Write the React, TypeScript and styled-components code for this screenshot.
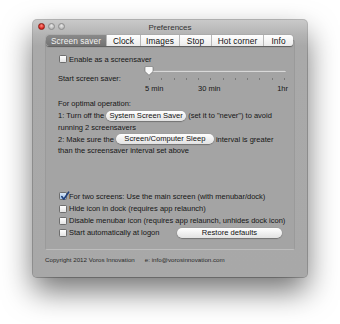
import React from "react";
import styled, { createGlobalStyle } from "styled-components";

const Global = createGlobalStyle`
  html, body { margin: 0; padding: 0; background: #ffffff; }
  body { font-family: "Liberation Sans", Arial, sans-serif; -webkit-font-smoothing: antialiased; }
`;

const Desk = styled.div`
  width: 340px;
  height: 324px;
  padding: 20px 0 0 33px;
  box-sizing: border-box;
  overflow: hidden;
`;

const Window = styled.div`
  width: 274px;
  height: 257px;
  border-radius: 4px;
  background: #a9a9a9;
  box-shadow: 0 14px 30px rgba(0, 0, 0, 0.55), 0 0 0 1px rgba(0, 0, 0, 0.25);
  display: flex;
  flex-direction: column;
  overflow: hidden;
`;

const TitleBar = styled.div`
  height: 14px;
  position: relative;
  display: flex;
  align-items: center;
  justify-content: center;
  background: linear-gradient(#c9c9c9, #b4b4b4);
`;

const Lights = styled.div`
  position: absolute;
  left: 5px;
  top: 3px;
  display: flex;
  gap: 3px;
`;

const Light = styled.div<{ $red?: boolean }>`
  width: 7px;
  height: 7px;
  border-radius: 50%;
  box-sizing: border-box;
  background: ${(p) =>
    p.$red
      ? "radial-gradient(circle at 50% 35%, #ff8a80, #d8221a 70%)"
      : "radial-gradient(circle at 50% 35%, #e8e8e8, #b9b9b9 70%)"};
  border: 0.5px solid ${(p) => (p.$red ? "#8a1c16" : "#8c8c8c")};
`;

const Title = styled.div`
  font-size: 8px;
  color: #333;
  line-height: 14px;
  padding-top: 1px;
`;

const Body = styled.div`
  flex: 1;
  display: flex;
  flex-direction: column;
  padding: 0 12px;
  background: linear-gradient(#b4b4b4 0px, #a9a9a9 12px, #a8a8a8 100%);
`;

const Tabs = styled.div`
  display: flex;
  height: 11px;
  margin: 1px 0 0 1px;
  width: 247px;
  border-radius: 3px;
  background: linear-gradient(#ffffff, #ebebeb);
  box-shadow: 0 0.5px 1px rgba(0, 0, 0, 0.45);
  position: relative;
  z-index: 1;
  overflow: hidden;
`;

const Tab = styled.div<{ $w: number; $active?: boolean; $last?: boolean }>`
  width: ${(p) => p.$w}px;
  display: flex;
  align-items: center;
  justify-content: center;
  font-size: 8.3px;
  letter-spacing: 0.1px;
  color: ${(p) => (p.$active ? "#f2f2f2" : "#111")};
  background: ${(p) => (p.$active ? "linear-gradient(#8a8a8a, #737373)" : "transparent")};
  border-right: ${(p) => (p.$last ? "none" : "1px solid #b8b8b8")};
  box-sizing: border-box;
  white-space: nowrap;
`;

const Panel = styled.div`
  margin-top: -6px;
  height: 210px;
  box-sizing: border-box;
  border: 1px solid #9a9a9a;
  border-top-color: #8f8f8f;
  border-bottom-color: #bdbdbd;
  border-radius: 2px;
  background: #a4a4a4;
  padding: 12px 0 0 12px;
  display: flex;
  flex-direction: column;
  font-size: 7.5px;
  color: #161616;
`;

const CheckRow = styled.div`
  display: flex;
  align-items: center;
  height: 12.2px;
  gap: 2px;
  white-space: nowrap;
`;

const Box = styled.div<{ $checked?: boolean }>`
  width: 8px;
  height: 8px;
  box-sizing: border-box;
  border-radius: 1.5px;
  border: 0.5px solid #6e6e6e;
  background: ${(p) =>
    p.$checked ? "linear-gradient(#d7e6f7, #9fc0e6)" : "linear-gradient(#ffffff, #e4e4e4)"};
  position: relative;
  flex: none;
  margin-left: 1px;
`;

const Check = styled.svg`
  position: absolute;
  left: 0px;
  top: -2px;
`;

const SliderRow = styled.div`
  display: flex;
  margin-top: 3px;
`;

const SliderLabel = styled.div`
  width: 90px;
  padding-top: 6px;
  white-space: nowrap;
`;

const SliderArea = styled.div`
  width: 140px;
  display: flex;
  flex-direction: column;
`;

const TrackWrap = styled.div`
  height: 9px;
  position: relative;
`;

const Track = styled.div`
  position: absolute;
  left: 1px;
  right: 2px;
  top: 2px;
  height: 2px;
  border-radius: 1px;
  background: #d9d9d9;
  box-shadow: inset 0 0.5px 0 #7d7d7d;
`;

const Thumb = styled.svg`
  position: absolute;
  left: -4px;
  top: -2px;
`;

const Ticks = styled.div`
  display: flex;
  justify-content: space-between;
  padding: 0 3px 0 1px;
  height: 4px;
  margin-top: 1px;
`;

const Tick = styled.div`
  width: 1px;
  height: 2px;
  background: #7a7a7a;
`;

const TickLabels = styled.div`
  position: relative;
  height: 12px;
  margin-top: 2px;
  white-space: nowrap;
`;

const TickLabel = styled.span<{ $left?: number; $right?: number }>`
  position: absolute;
  top: 0;
  ${(p) => (p.$left !== undefined ? `left: ${p.$left}px;` : "")}
  ${(p) => (p.$right !== undefined ? `right: ${p.$right}px;` : "")}
`;

const Info = styled.div`
  margin-top: 2px;
  line-height: 11.8px;
  white-space: nowrap;
`;

const Line = styled.div`
  display: flex;
  align-items: center;
  height: 11.8px;
`;

const PillButton = styled.span<{ $w: number; $mr?: number }>`
  display: inline-flex;
  align-items: center;
  justify-content: center;
  width: ${(p) => p.$w}px;
  height: 10px;
  margin: 0 ${(p) => p.$mr ?? 2}px 0 2px;
  border-radius: 5px;
  background: linear-gradient(#ffffff, #f0f0f0 50%, #e2e2e2);
  box-shadow: 0 0.5px 1px rgba(0, 0, 0, 0.55);
  font-size: 7.6px;
  color: #111;
  line-height: 10px;
`;

const Bottom = styled.div`
  margin-top: auto;
  padding-bottom: 10px;
`;

const Footer = styled.div`
  flex: 1;
  display: flex;
  gap: 10px;
  font-size: 6.2px;
  color: #2a2a2a;
  padding: 6px 0 0 0;
  white-space: nowrap;
`;

const Gap = styled.div`
  flex: 1;
`;

function CheckBox({ checked }: { checked?: boolean }) {
  return (
    <Box $checked={checked}>
      {checked && (
        <Check width="10" height="10" viewBox="0 0 10 10">
          <path d="M1.8 5.6 L3.8 8.2 L8.6 1.2" fill="none" stroke="#1f3f7a" strokeWidth="1.6" strokeLinecap="round" strokeLinejoin="round" />
        </Check>
      )}
    </Box>
  );
}

export default function App() {
  const tabs = [
    { l: "Screen saver", w: 61 },
    { l: "Clock", w: 34 },
    { l: "Images", w: 39 },
    { l: "Stop", w: 32 },
    { l: "Hot corner", w: 52 },
    { l: "Info", w: 29 },
  ];
  return (
    <>
      <Global />
      <Desk>
        <Window>
          <TitleBar>
            <Lights>
              <Light $red />
              <Light />
              <Light />
            </Lights>
            <Title>Preferences</Title>
          </TitleBar>
          <Body>
            <Tabs>
              {tabs.map((t, i) => (
                <Tab key={t.l} $w={t.w} $active={i === 0} $last={i === tabs.length - 1}>
                  {t.l}
                </Tab>
              ))}
            </Tabs>
            <Panel>
              <CheckRow>
                <CheckBox />
                <span>Enable as a screensaver</span>
              </CheckRow>
              <SliderRow>
                <SliderLabel>Start screen saver:</SliderLabel>
                <SliderArea>
                  <TrackWrap>
                    <Track />
                    <Thumb width="10" height="10" viewBox="0 0 10 10">
                      <path d="M1 1.5 Q1 0.5 2 0.5 L8 0.5 Q9 0.5 9 1.5 L9 5.5 L5 9.2 L1 5.5 Z" fill="#fafafa" stroke="#6a6a6a" strokeWidth="0.6" />
                    </Thumb>
                  </TrackWrap>
                  <Ticks>
                    {Array.from({ length: 12 }).map((_, i) => (
                      <Tick key={i} />
                    ))}
                  </Ticks>
                  <TickLabels>
                    <TickLabel $left={-3}>5 min</TickLabel>
                    <TickLabel $left={50}>30 min</TickLabel>
                    <TickLabel $right={0}>1hr</TickLabel>
                  </TickLabels>
                </SliderArea>
              </SliderRow>
              <Info>
                <Line>For optimal operation:</Line>
                <Line>
                  1: Turn off the <PillButton $w={80}>System Screen Saver</PillButton> (set it to "never") to avoid
                </Line>
                <Line>running 2 screensavers</Line>
                <Line>
                  2: Make sure the <PillButton $w={98}>Screen/Computer Sleep</PillButton> interval is greater
                </Line>
                <Line>than the screensaver interval set above</Line>
              </Info>
              <Bottom>
                <CheckRow>
                  <CheckBox checked />
                  <span>For two screens: Use the main screen (with menubar/dock)</span>
                </CheckRow>
                <CheckRow>
                  <CheckBox />
                  <span>Hide icon in dock (requires app relaunch)</span>
                </CheckRow>
                <CheckRow>
                  <CheckBox />
                  <span>Disable menubar icon (requires app relaunch, unhides dock icon)</span>
                </CheckRow>
                <CheckRow>
                  <CheckBox />
                  <span>Start automatically at logon</span>
                  <Gap />
                  <PillButton $w={105} $mr={12}>Restore defaults</PillButton>
                </CheckRow>
              </Bottom>
            </Panel>
            <Footer>
              <span>Copyright 2012 Voros Innovation</span>
              <span>e: info@vorosinnovation.com</span>
            </Footer>
          </Body>
        </Window>
      </Desk>
    </>
  );
}
